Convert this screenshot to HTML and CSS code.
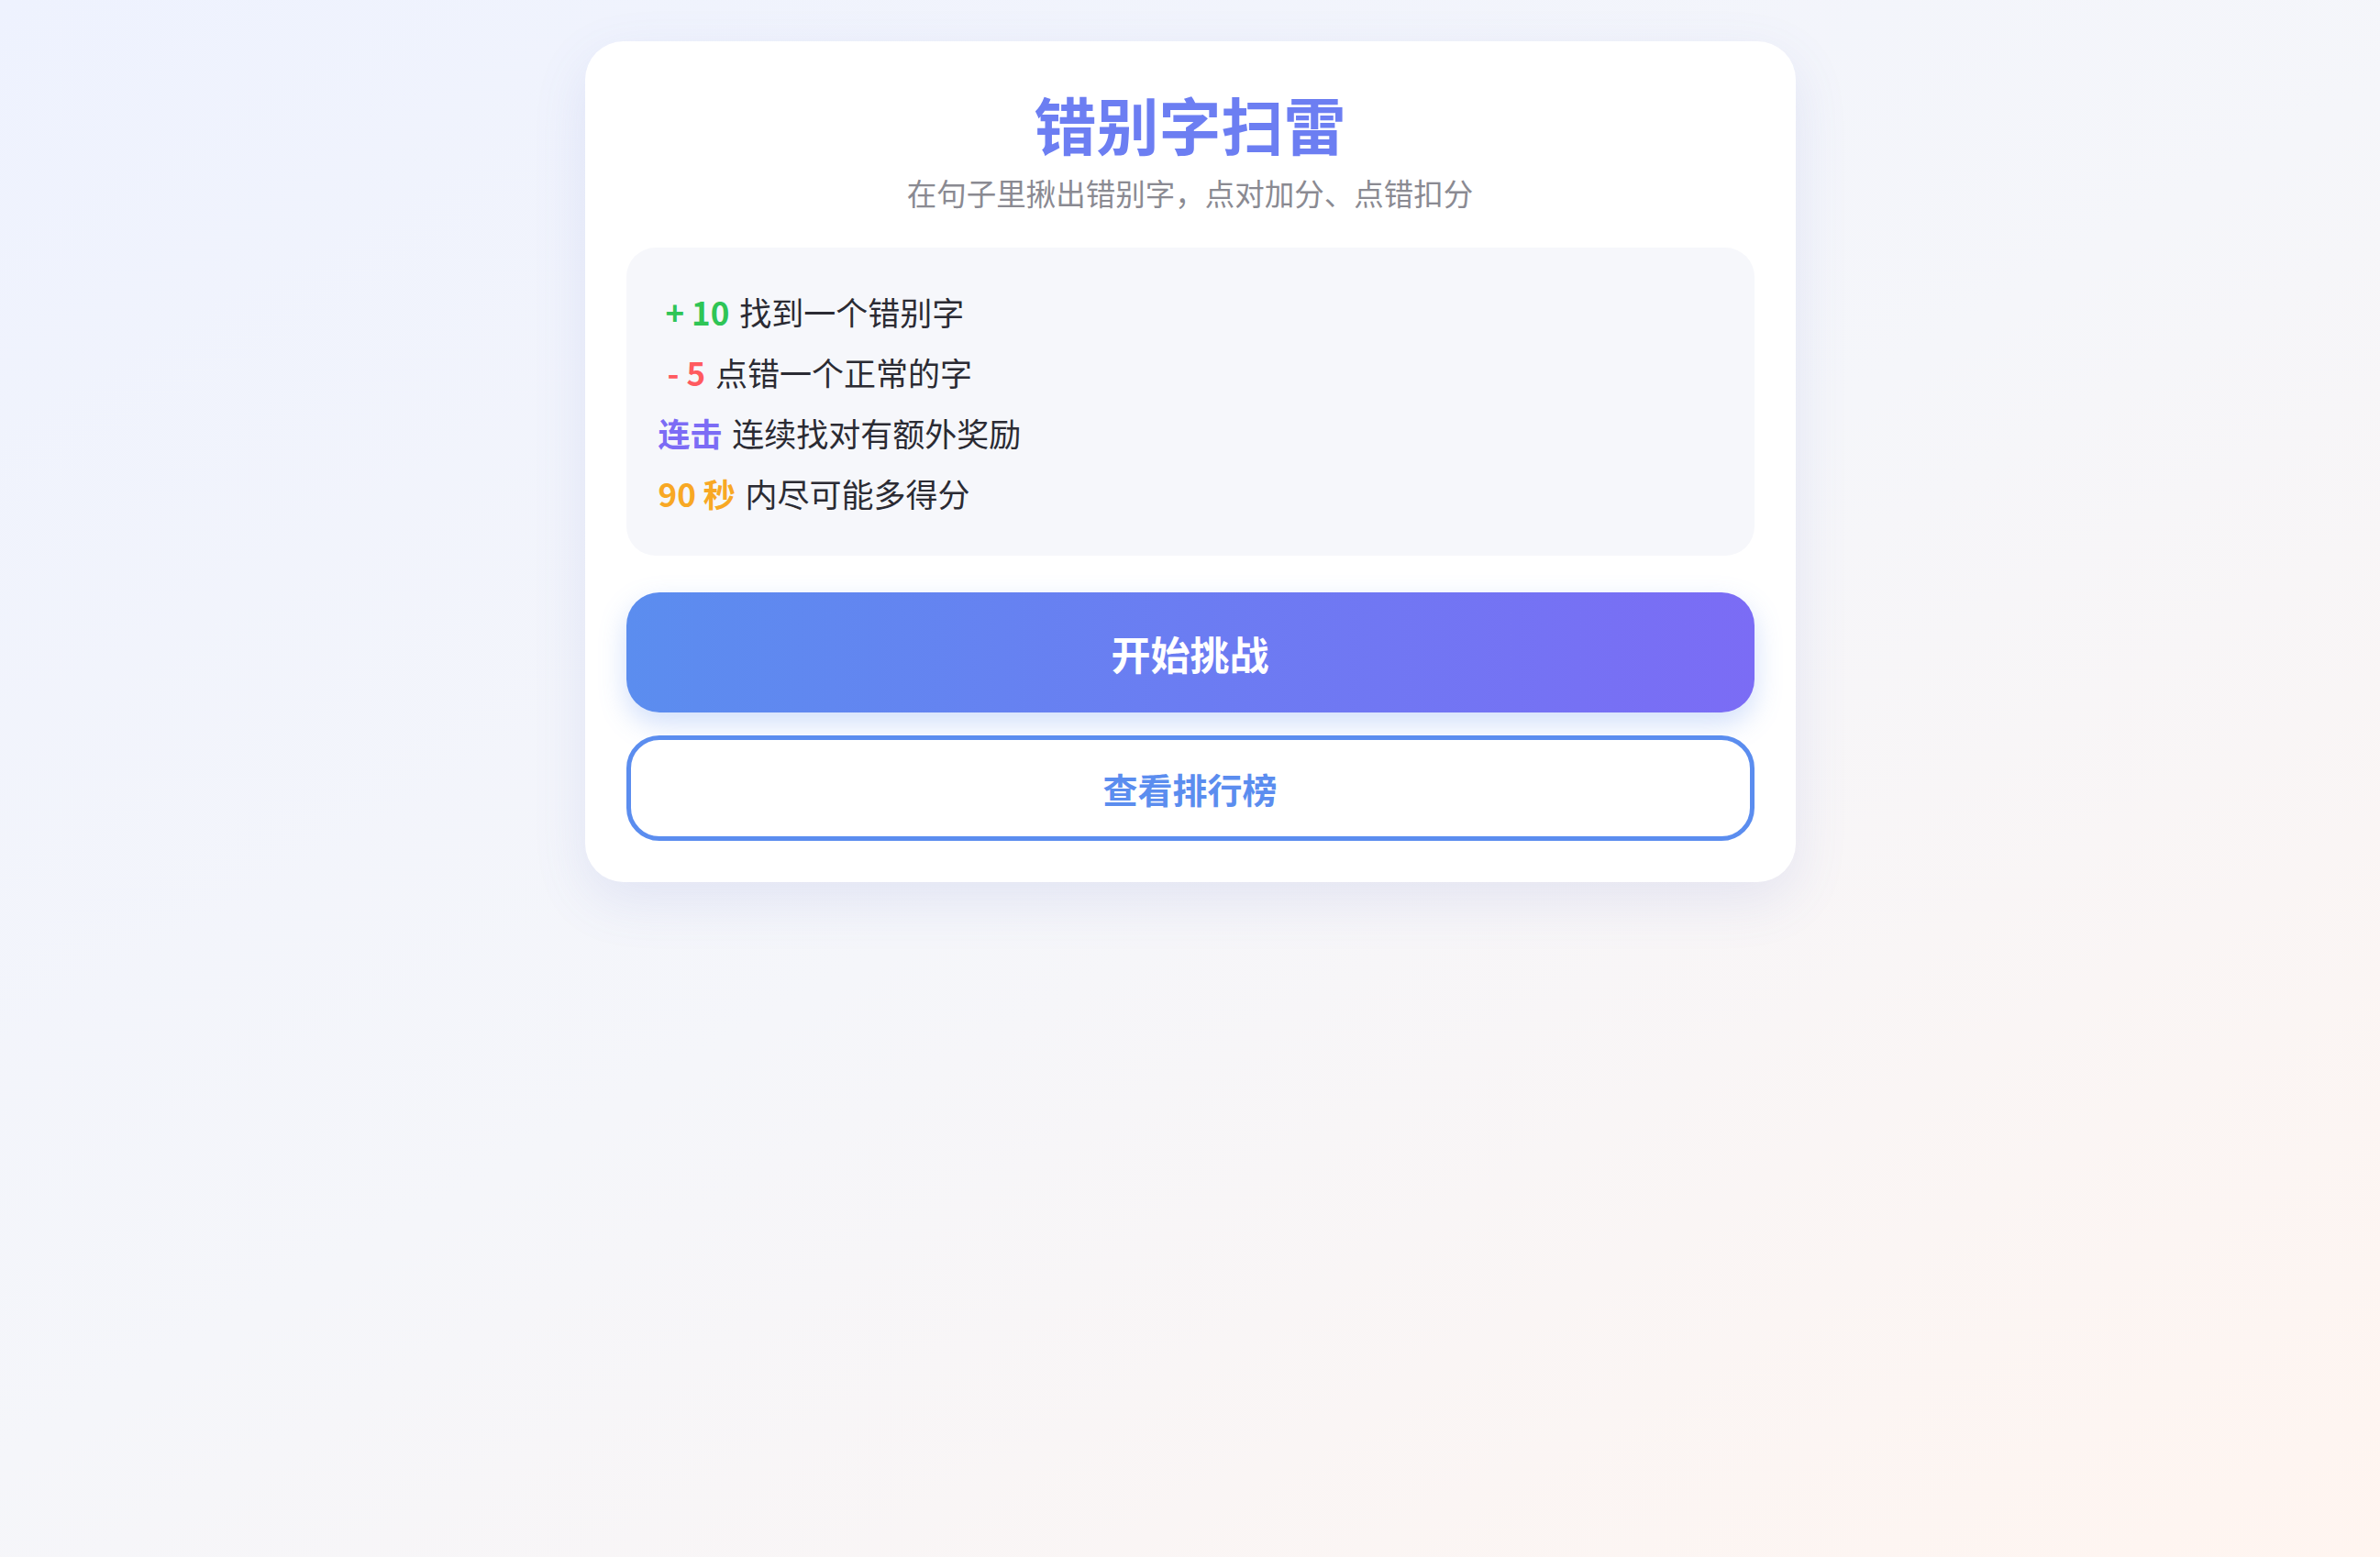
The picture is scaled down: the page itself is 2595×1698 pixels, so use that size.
FILE: index.html
```html
<!DOCTYPE html>
<html lang="zh-CN">

<head>
    <meta charset="UTF-8">
    <meta name="viewport" content="width=device-width, initial-scale=1.0">
    <title>错别字扫雷</title>
    <link rel="stylesheet" href="styles.css">
</head>

<body>
    <div class="card">
        <h1 class="title">错别字扫雷</h1>
        <p class="sub">在句子里揪出错别字，点对加分、点错扣分</p>

        <!-- 规则说明 -->
        <div class="rules">
            <p class="row"><span class="tag plus">+ 10</span> 找到一个错别字</p>
            <p class="row"><span class="tag minus">- 5</span> 点错一个正常的字</p>
            <p class="row"><span class="tag combo">连击</span> 连续找对有额外奖励</p>
            <p class="row"><span class="tag time">90 秒</span> 内尽可能多得分</p>
        </div>

        <button class="btn start">开始挑战</button>
        <button class="btn rank">查看排行榜</button>
    </div>
</body>

</html>
```

FILE: styles.css
```css
* {
    padding: 0;
    margin: 0;
    box-sizing: border-box;
}

body {
    min-height: 100vh;
    font-family: "Noto Sans CJK SC", "Noto Sans", sans-serif;
    background: linear-gradient(150deg, #eef2fe 0%, #f5f6fa 50%, #fff5f0 100%);
    padding-top: 45px;
}

.card {
    width: 1320px;
    margin: 0 auto;
    padding: 45px;
    background: #fff;
    border-radius: 42px;
    box-shadow: 0 20px 60px rgba(90, 110, 200, 0.12);
}

.title {
    margin-top: 5px;
    text-align: center;
    font-size: 68px;
    line-height: 80px;
    font-weight: bold;
    color: #6c7ef2;
}

.sub {
    margin-top: 10px;
    text-align: center;
    font-size: 32.5px;
    line-height: 49px;
    color: #8a8a92;
}

.rules {
    margin-top: 36px;
    background: #f6f7fb;
    border-radius: 32px;
    padding: 37px 35px 35px;
}

.rules .row {
    font-size: 35px;
    line-height: 66px;
    color: #2b2b33;
}

.rules .tag {
    font-weight: bold;
    margin-right: 3px;
}

.tag.plus {
    color: #2fc556;
    margin-left: 8px;
}

.tag.minus {
    color: #ff5a5f;
    margin-left: 10px;
}

.tag.combo {
    color: #7c6cf5;
}

.tag.time {
    color: #f8a824;
}

.btn {
    display: block;
    width: 100%;
    font-family: inherit;
    font-weight: bold;
    cursor: pointer;
    border-radius: 36px;
}

.btn.start {
    margin-top: 40px;
    height: 131px;
    border: none;
    font-size: 43px;
    color: #fff;
    background: linear-gradient(90deg, #5b8def, #7b6cf5);
    box-shadow: 0 12px 30px rgba(91, 141, 239, 0.28);
}

.btn.rank {
    margin-top: 25px;
    height: 115px;
    border: 5px solid #5b8def;
    background: #fff;
    font-size: 38px;
    color: #5b8def;
}
```
